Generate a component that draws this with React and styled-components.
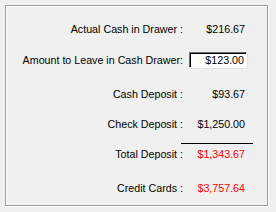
import styled, { createGlobalStyle } from 'styled-components';

const GlobalStyle = createGlobalStyle`
  html, body {
    margin: 0;
    padding: 0;
    background: #f0f0f0;
  }
  body {
    width: 276px;
    height: 212px;
    overflow: hidden;
    font-family: "Liberation Sans", Arial, sans-serif;
    font-size: 10.7px;
    color: #000;
  }
`;

const Page = styled.div`
  padding: 5px;
`;

const Panel = styled.div`
  width: 263px;
  height: 201px;
  box-sizing: border-box;
  border: 1px solid #a0a0a0;
  box-shadow: inset 1px 1px 0 #fff, 1px 1px 0 #fff;
  padding-top: 13px;
  display: flex;
  flex-direction: column;
`;

const Row = styled.div`
  display: grid;
  grid-template-columns: 177px 64px;
  align-items: center;
  height: 20px;
  margin-top: ${({ $gap }) => $gap || 0}px;
`;

const Label = styled.span`
  text-align: right;
  white-space: nowrap;
`;

const Value = styled.span`
  text-align: right;
  padding-right: 2px;
  color: ${({ $red }) => ($red ? '#ff0000' : '#000')};
`;

const Input = styled.input`
  justify-self: end;
  width: 58px;
  height: 16px;
  box-sizing: border-box;
  margin: 0;
  padding: 0 2px 0 0;
  text-align: right;
  font-family: inherit;
  font-size: 10.7px;
  color: #000;
  background: #fff;
  border: 1px solid;
  border-color: #6d6d6d #fff #fff #6d6d6d;
  box-shadow: inset 1px 1px 0 #000, 1px 1px 0 #e3e3e3;
  outline: none;
`;

const Divider = styled.div`
  margin-left: 175px;
  width: 72px;
  height: 1px;
  background: #000;
  margin-top: ${({ $gap }) => $gap}px;
`;

const App = () => {
  return (
    <Page>
      <GlobalStyle />
      <Panel>
        <Row>
          <Label>Actual Cash in Drawer :</Label>
          <Value>$216.67</Value>
        </Row>
        <Row $gap={11}>
          <Label>Amount to Leave in Cash Drawer:</Label>
          <Input defaultValue="$123.00" />
        </Row>
        <Row $gap={14}>
          <Label>Cash Deposit :</Label>
          <Value>$93.67</Value>
        </Row>
        <Row $gap={10}>
          <Label>Check Deposit :</Label>
          <Value>$1,250.00</Value>
        </Row>
        <Divider $gap={9} />
        <Row $gap={0}>
          <Label>Total Deposit :</Label>
          <Value $red>$1,343.67</Value>
        </Row>
        <Row $gap={14}>
          <Label>Credit Cards :</Label>
          <Value $red>$3,757.64</Value>
        </Row>
      </Panel>
    </Page>
  );
};

export default App;
